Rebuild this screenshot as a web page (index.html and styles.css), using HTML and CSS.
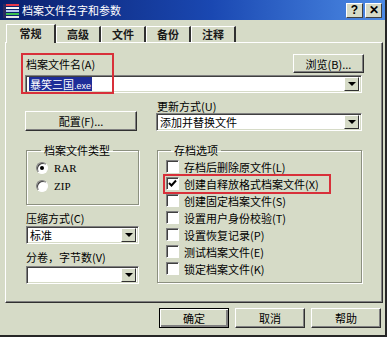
FILE: index.html
```html
<!doctype html>
<html lang="zh-CN">
<head>
 <meta charset="UTF-8">
 <title>档案文件名字和参数</title>
 <link rel="stylesheet" href="styles.css">
</head>
<body>
<div class="window">
 <div class="titlebar">
  <svg class="app-icon" width="16" height="15" viewBox="0 0 16 15">
   <rect x="0" y="1" width="16" height="2" fill="#e8384a"/>
   <rect x="0" y="4" width="16" height="2" fill="#f4f4f4"/>
   <rect x="0" y="7" width="16" height="2" fill="#b8c8f0"/>
   <rect x="0" y="10" width="16" height="2" fill="#3cc050"/>
   <rect x="0" y="13" width="16" height="2" fill="#e8e8e8"/>
   <rect x="0" y="1" width="3" height="14" fill="#2a2a60"/>
  </svg>
  <span class="title">档案文件名字和参数</span>
  <div class="caption-btns">
   <span class="cbtn">?</span>
   <span class="cbtn">✕</span>
  </div>
 </div>

 <div class="content">
  <div class="tabs">
   <div class="tab active">常规</div>
   <div class="tab">高级</div>
   <div class="tab">文件</div>
   <div class="tab">备份</div>
   <div class="tab">注释</div>
  </div>

  <div class="panel">
   <div class="row-top">
    <label class="lbl">档案文件名(A)</label>
    <button class="btn browse">浏览(B)...</button>
   </div>
   <div class="combo wide">
    <span class="value"><span class="sel">暴笑三国<small>.exe</small></span></span>
    <span class="arrow"></span>
   </div>

   <div class="row-mid">
    <button class="btn config">配置(F)...</button>
    <div class="col-right">
     <label class="lbl">更新方式(U)</label>
     <div class="combo">
      <span class="value">添加并替换文件</span>
      <span class="arrow"></span>
     </div>
    </div>
   </div>

   <div class="row-groups">
    <div class="col-left">
     <fieldset class="group">
      <legend>档案文件类型</legend>
      <div class="opt"><span class="radio on"></span>RAR</div>
      <div class="opt"><span class="radio"></span>ZIP</div>
     </fieldset>
     <label class="lbl gap">压缩方式(C)</label>
     <div class="combo">
      <span class="value">标准</span>
      <span class="arrow"></span>
     </div>
     <label class="lbl gap">分卷，字节数(V)</label>
     <div class="combo">
      <span class="value"></span>
      <span class="arrow"></span>
     </div>
    </div>

    <fieldset class="group options">
     <legend>存档选项</legend>
     <div class="opt"><span class="check"></span>存档后删除原文件(L)</div>
     <div class="opt"><span class="check"><svg width="9" height="9" viewBox="0 0 9 9"><path d="M1 4 L3.5 6.5 L8 1.5" fill="none" stroke="#000" stroke-width="2"/></svg></span>创建自释放格式档案文件(X)</div>
     <div class="opt"><span class="check"></span>创建固定档案文件(S)</div>
     <div class="opt"><span class="check"></span>设置用户身份校验(T)</div>
     <div class="opt"><span class="check"></span>设置恢复记录(P)</div>
     <div class="opt"><span class="check"></span>测试档案文件(E)</div>
     <div class="opt"><span class="check"></span>锁定档案文件(K)</div>
    </fieldset>
   </div>

   <div class="mark mark-name"></div>
   <div class="mark mark-sfx"></div>
  </div>

  <div class="actions">
   <button class="btn default">确定</button>
   <button class="btn">取消</button>
   <button class="btn">帮助</button>
  </div>
 </div>
</div>
</body>
</html>
```

FILE: styles.css
```css
*{
 margin:0;
 padding:0;
 box-sizing:border-box;
}
body{
 background:#d6dbc7;
}
.window{
 width:387px;
 height:337px;
 background:#d6dbc7;
 border-right:2px solid #262626;
 border-bottom:2px solid #262626;
 display:flex;
 flex-direction:column;
 font:11px "Noto Sans CJK SC", sans-serif;
 color:#000;
}

/* 标题栏 */
.titlebar{
 height:20px;
 flex:none;
 display:flex;
 align-items:center;
 padding:0 3px 0 3px;
 background:linear-gradient(to right,#0a1f6c,#1a48b2 55%,#4c8ae4);
 color:#fff;
}
.app-icon{
 flex:none;
 margin-right:3px;
}
.title{
 flex:1;
 font-size:11px;
 line-height:14px;
}
.caption-btns{
 display:flex;
 gap:2px;
}
.cbtn{
 width:17px;
 height:15px;
 display:flex;
 align-items:center;
 justify-content:center;
 background:#d6dbc7;
 color:#000;
 font:bold 12px "Liberation Sans", sans-serif;
 border:1px solid;
 border-color:#fff #404040 #404040 #fff;
}

.content{
 flex:1;
 display:flex;
 flex-direction:column;
 padding:4px 2px 0 5px;
}

/* 选项卡 */
.tabs{
 height:18px;
 display:flex;
 align-items:flex-end;
 padding-left:1px;
}
.tab{
 width:45px;
 height:16px;
 line-height:14px;
 text-align:center;
 font-size:11px;
 font-weight:bold;
 color:#1a1a1a;
 border-top:1px solid #fff;
 border-left:1px solid #fff;
 border-right:2px solid #303030;
}
.tab.active{
 width:50px;
 height:19px;
 line-height:17px;
 margin-bottom:-1px;
 position:relative;
 z-index:1;
 background:#d6dbc7;
}

/* 面板 */
.panel{
 position:relative;
 height:261px;
 border:1px solid;
 border-color:#fff #303030 #303030 #fff;
 box-shadow:inset -1px -1px #808080;
 padding:11px 20px 0 19px;
}
.lbl{
 display:block;
 line-height:14px;
}
.row-top{
 height:19px;
 display:flex;
 align-items:center;
 justify-content:space-between;
 padding-left:1px;
}

/* 按钮 */
.btn{
 font:11px "Noto Sans CJK SC", sans-serif;
 color:#000;
 background:#d6dbc7;
 height:20px;
 border:1px solid;
 border-color:#fff #303030 #303030 #fff;
 box-shadow:inset -1px -1px #808080;
}
.browse{
 width:71px;
 height:19px;
 margin-right:-2px;
}
.config{
 width:112px;
 flex:none;
}
.btn.default{
 border-color:#000;
 box-shadow:inset 1px 1px #fff, inset -2px -2px #808080;
}

/* 下拉框 */
.combo{
 height:18px;
 display:flex;
 background:#fff;
 border:1px solid;
 border-color:#808080 #fff #fff #808080;
 box-shadow:inset 1px 1px #404040, inset -1px -1px #d6dbc7;
 padding:1px 2px 1px 1px;
}
.combo .value{
 flex:1;
 line-height:14px;
 padding-left:2px;
 white-space:nowrap;
 overflow:hidden;
}
.combo.wide{
 margin-top:2px;
}
.combo .sel{
 display:inline-block;
 background:#1e2d98;
 color:#fff;
 padding:0 1px;
 line-height:14px;
}
.combo .sel small{
 font:9px "Liberation Sans", sans-serif;
}
.arrow{
 width:15px;
 flex:none;
 display:flex;
 align-items:center;
 justify-content:center;
 background:#d6dbc7;
 border:1px solid;
 border-color:#fff #303030 #303030 #fff;
}
.arrow::after{
 content:'';
 border-left:4px solid transparent;
 border-right:4px solid transparent;
 border-top:4px solid #000;
}

.row-mid{
 display:flex;
 align-items:flex-end;
 gap:19px;
}
.col-right{
 flex:1;
 padding-top:6px;
}
.row-mid .lbl{
 padding-left:1px;
}

/* 分组 */
.row-groups{
 display:flex;
 gap:18px;
 margin-top:12px;
 padding-left:1px;
}
.col-left{
 width:113px;
 flex:none;
}
.group{
 border:1px solid #8c9080;
 box-shadow:1px 1px #fff, inset 1px 1px #fff;
 padding:2px 0 9px 9px;
}
.group legend{
 margin-left:5px;
 padding:0 3px;
 line-height:14px;
}
.opt{
 height:18px;
 display:flex;
 align-items:center;
 gap:5px;
}
.col-left .opt{
 font:11px "Liberation Serif", serif;
 gap:6px;
}
.radio{
 width:12px;
 height:12px;
 border-radius:50%;
 background:#fff;
 border:1px solid;
 border-color:#808080 #fff #fff #808080;
 box-shadow:inset 1px 1px #404040;
 display:flex;
 align-items:center;
 justify-content:center;
}
.radio.on::after{
 content:'';
 width:4px;
 height:4px;
 border-radius:50%;
 background:#000;
}
.lbl.gap{
 margin-top:6px;
}
.col-left .combo{
 margin-top:1px;
}
.col-left .combo:last-child{
 margin-top:2px;
}

.options{
 flex:1;
 height:140px;
 padding:1px 0 0 8px;
}
.options .opt{
 height:17px;
}
.check{
 width:13px;
 height:13px;
 flex:none;
 background:#fff;
 border:1px solid;
 border-color:#808080 #fff #fff #808080;
 box-shadow:inset 1px 1px #404040;
 display:flex;
 align-items:center;
 justify-content:center;
}

/* 红色标注框 */
.mark{
 position:absolute;
 border:2px solid #d8303a;
}
.mark-name{
 left:15px;
 top:10px;
 width:93px;
 height:41px;
}
.mark-sfx{
 left:157px;
 top:131px;
 width:168px;
 height:20px;
}

/* 底部按钮 */
.actions{
 display:flex;
 justify-content:flex-end;
 gap:6px;
 margin-top:5px;
 padding-right:2px;
}
.actions .btn{
 width:70px;
}
```
